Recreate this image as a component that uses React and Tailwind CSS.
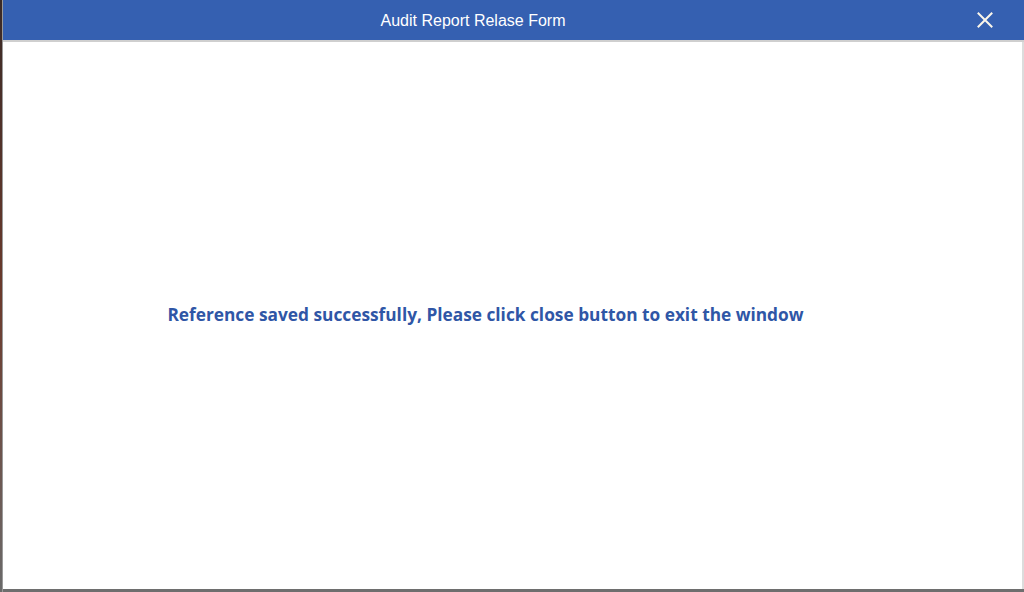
import React from "react";

const CloseIcon = () => (
  <svg width="16" height="16" viewBox="0 0 16 16" fill="none">
    <path d="M1.5 1.5 L14.5 14.5 M14.5 1.5 L1.5 14.5" stroke="#fbf6ea" strokeWidth="2" strokeLinecap="square" />
  </svg>
);

export default function App() {
  return (
    <div className="flex h-[592px] w-[1024px] overflow-hidden bg-[#5a4a48]">
      {/* thin strip of the page behind the window */}
      <div className="w-[2px] bg-gradient-to-b from-[#3a2a26] via-[#6b3a2c] to-[#6a6a6a]" />
      <div className="flex flex-1 flex-col border-l border-[#9a9a9a] bg-white">
        <div className="relative flex h-[40px] shrink-0 items-center bg-[#3560b1] pt-[2px]">
          <div className="w-[940px] text-center font-['Liberation_Sans',Arial,sans-serif] text-[16px] text-white">
            Audit Report Relase Form
          </div>
          <button className="absolute right-[31px] top-[12px] flex items-center justify-center">
            <CloseIcon />
          </button>
        </div>
        <div className="h-[2px] shrink-0 bg-[#cfcfcf]" />
        <div className="flex flex-1 border-r-2 border-[#dcdcdc]">
          <div className="flex flex-1 items-start justify-center pr-[54px] pt-[260px]">
            <p className="text-center font-['Open_Sans',sans-serif] text-[17.3px] font-bold text-[#2f56a6]">
              Reference saved successfully, Please click close button to exit the window
            </p>
          </div>
        </div>
        <div className="h-[3px] shrink-0 bg-[#6e6e6e]" />
      </div>
    </div>
  );
}
